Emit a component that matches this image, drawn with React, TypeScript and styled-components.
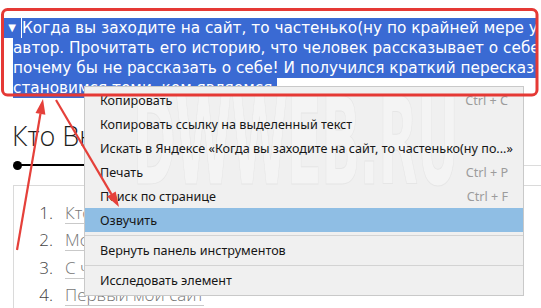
import React from 'react';
import styled, { createGlobalStyle } from 'styled-components';

const GlobalStyle = createGlobalStyle`
  html, body {
    margin: 0;
    padding: 0;
    background: #fff;
  }
  body {
    overflow: hidden;
  }
`;

const Page = styled.div`
  position: relative;
  width: 541px;
  height: 308px;
  overflow: hidden;
  background: #fff;
`;

/* selected paragraph at the top */
const Intro = styled.div`
  margin: 18px 4px 0 3px;
  overflow: hidden;
  font-family: "DejaVu Sans", sans-serif;
  font-size: 15.3px;
  line-height: 20px;
  color: #fff;
  white-space: nowrap;
`;

const FirstLine = styled.div`
  display: flex;
`;

const Marker = styled.span`
  flex: none;
  width: 18px;
  margin-right: 1px;
  background: #3a6ad3;
  font-size: 10px;
  text-align: center;
`;

const Sel = styled.div`
  flex: 1;
  background: #3a6ad3;
`;

const Rest = styled.div<{ $fit?: boolean }>`
  margin-left: 10px;
  width: ${(p) => (p.$fit ? 'fit-content' : 'auto')};
  background: #3a6ad3;
`;

/* page content behind the menu */
const Section = styled.div`
  padding: 20px 0 0 12px;
  font-family: "Open Sans", "Noto Sans", sans-serif;
  font-weight: 300;
`;

const Heading = styled.h2`
  margin: 0;
  font-size: 27px;
  font-weight: 300;
  line-height: 36px;
  color: #1d1d1d;
`;

const Rule = styled.div`
  display: flex;
  align-items: center;
  margin: 6px 0 0 1px;
  height: 10px;
`;

const Dot = styled.span`
  width: 9px;
  height: 9px;
  border-radius: 50%;
  background: #000;
`;

const RuleBar = styled.span<{ $grey?: boolean }>`
  height: ${(p) => (p.$grey ? '1px' : '2.5px')};
  background: ${(p) => (p.$grey ? '#dcdcdc' : '#000')};
  width: ${(p) => (p.$grey ? 'auto' : '140px')};
  flex: ${(p) => (p.$grey ? '1' : 'none')};
  margin-left: ${(p) => (p.$grey ? '0' : '-4px')};
`;

const TocBox = styled.div`
  margin: 15px 0 0 1px;
  padding: 15px 0 0 0;
  border-top: 1px solid #dadada;
  border-left: 1px solid #dadada;
  height: 200px;
`;

const TocRow = styled.div`
  display: flex;
  align-items: baseline;
  height: 27.3px;
`;

const TocNum = styled.span`
  width: 39px;
  text-align: right;
  padding-right: 12px;
  font-size: 17px;
  color: #444;
`;

const TocLink = styled.span`
  font-size: 17px;
  color: #777;
  line-height: 21px;
  border-bottom: 1px solid #c9c9c9;
`;

/* context menu */
const Menu = styled.div`
  position: absolute;
  left: 84px;
  top: 86px;
  width: 438px;
  padding: 1px 0 3px;
  background: #f0f0f0;
  border: 1px solid #c9c9c9;
  font-family: "Noto Sans", "Open Sans", sans-serif;
  font-size: 12.6px;
  color: #161616;
  overflow: hidden;
`;

const Watermark = styled.span`
  position: absolute;
  left: 48px;
  top: -6px;
  font-family: "DejaVu Sans Condensed", "DejaVu Sans", sans-serif;
  font-weight: bold;
  font-size: 122px;
  line-height: 1;
  letter-spacing: -2px;
  color: #f4f4f4;
  -webkit-text-stroke: 1px #e6e6e6;
  transform: scaleX(0.47);
  transform-origin: left top;
  white-space: nowrap;
`;

const Item = styled.div<{ $active?: boolean }>`
  position: relative;
  display: flex;
  align-items: center;
  justify-content: space-between;
  height: 24px;
  padding: 0 15px;
  background: ${(p) => (p.$active ? '#8fbee4' : 'transparent')};
  white-space: nowrap;
`;

const Shortcut = styled.span`
  color: #9c9c9c;
`;

const Separator = styled.div`
  position: relative;
  height: 1px;
  margin: 3px 0 2px;
  background: #d3d3d3;
`;

const Overlay = styled.svg`
  position: absolute;
  left: 0;
  top: 0;
  pointer-events: none;
`;

type Entry = { label: string; keys?: string; active?: boolean } | 'sep';

const entries: Entry[] = [
  { label: 'Копировать', keys: 'Ctrl + C' },
  { label: 'Копировать ссылку на выделенный текст' },
  { label: 'Искать в Яндексе «Когда вы заходите на сайт, то частенько(ну по...»' },
  { label: 'Печать', keys: 'Ctrl + P' },
  { label: 'Поиск по странице', keys: 'Ctrl + F' },
  { label: 'Озвучить', active: true },
  'sep',
  { label: 'Вернуть панель инструментов' },
  'sep',
  { label: 'Исследовать элемент' },
];

const toc = ['Кто Вы такой', 'Мой первый компьютер', 'С чего всё началось', 'Первый мой сайт'];

function Arrow({ x1, y1, x2, y2 }: { x1: number; y1: number; x2: number; y2: number }) {
  const a = Math.atan2(y2 - y1, x2 - x1);
  const len = 15;
  const w = 5;
  const bx = x2 - Math.cos(a) * len;
  const by = y2 - Math.sin(a) * len;
  const px = -Math.sin(a) * w;
  const py = Math.cos(a) * w;
  return (
    <g fill="#e5403a" stroke="#e5403a">
      <line x1={x1} y1={y1} x2={bx} y2={by} strokeWidth={2.2} />
      <polygon points={`${x2},${y2} ${bx + px},${by + py} ${bx - px},${by - py}`} stroke="none" />
    </g>
  );
}

export default function App() {
  return (
    <Page>
      <GlobalStyle />
      <Intro>
        <FirstLine>
          <Marker>▼</Marker>
          <Sel>Когда вы заходите на сайт, то частенько(ну по крайней мере у меня) хочется узнать</Sel>
        </FirstLine>
        <Rest>автор. Прочитать его историю, что человек рассказывает о себе. И я подумал, а</Rest>
        <Rest>почему бы не рассказать о себе! И получился краткий пересказ того, как мы</Rest>
        <Rest $fit>становимся теми, кем являемся.</Rest>
      </Intro>

      <Section>
        <Heading>Кто Вы такой</Heading>
        <Rule>
          <Dot />
          <RuleBar />
          <RuleBar $grey />
        </Rule>
        <TocBox>
          {toc.map((t, i) => (
            <TocRow key={t}>
              <TocNum>{i + 1}.</TocNum>
              <TocLink>{t}</TocLink>
            </TocRow>
          ))}
        </TocBox>
      </Section>

      <Menu>
        <Watermark>DWWEB.RU</Watermark>
        {entries.map((e, i) =>
          e === 'sep' ? (
            <Separator key={i} />
          ) : (
            <Item key={i} $active={e.active}>
              <span>{e.label}</span>
              {e.keys && <Shortcut>{e.keys}</Shortcut>}
            </Item>
          )
        )}
      </Menu>

      <Overlay width={541} height={308} viewBox="0 0 541 308">
        <rect x={2.5} y={9.5} width={534.5} height={85.5} rx={5} fill="none" stroke="#e53935" strokeWidth={3} />
        <Arrow x1={17} y1={250} x2={43} y2={99} />
        <Arrow x1={56} y1={100} x2={119} y2={207} />
      </Overlay>
    </Page>
  );
}
